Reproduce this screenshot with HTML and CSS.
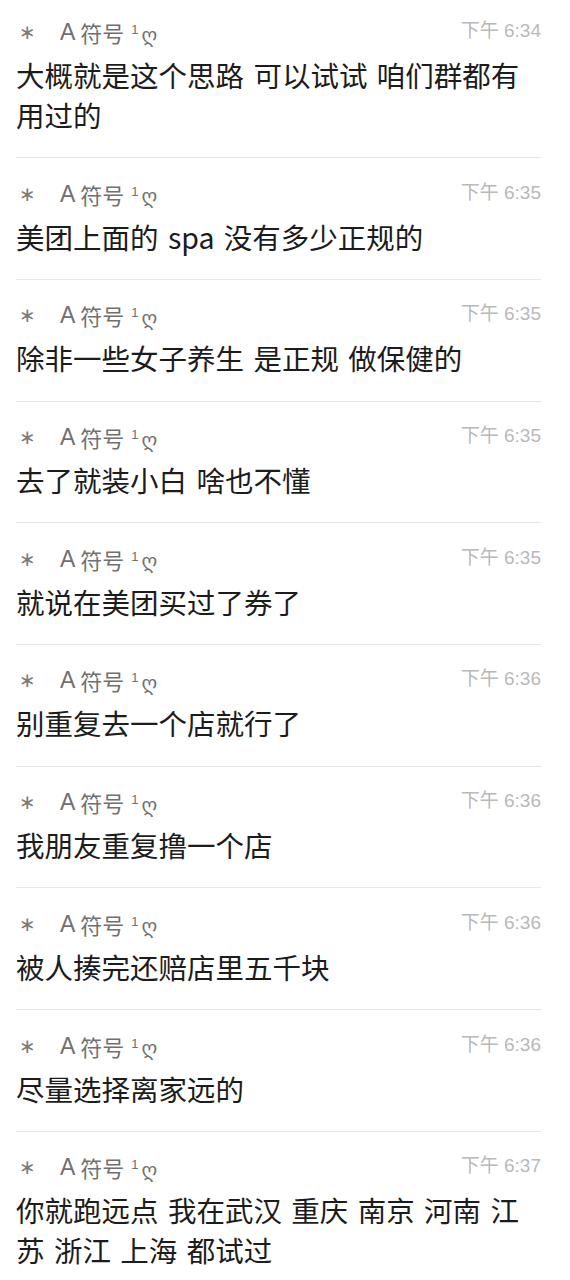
FILE: index.html
```html
<!DOCTYPE html>
<html lang="zh-CN">
<head>
<meta charset="utf-8">
<title>聊天记录</title>
<link rel="stylesheet" href="styles.css">
</head>
<body>
<div class="list">
  <div class="row">
    <div class="head"><span class="name"><span class="star">∗</span><span class="a">A</span>符号<span class="sup">1</span><span class="geo">ღ</span></span><span class="time">下午 6:34</span></div>
    <div class="msg">大概就是这个思路 可以试试 咱们群都有用过的</div>
  </div>
  <div class="row">
    <div class="head"><span class="name"><span class="star">∗</span><span class="a">A</span>符号<span class="sup">1</span><span class="geo">ღ</span></span><span class="time">下午 6:35</span></div>
    <div class="msg">美团上面的 spa 没有多少正规的</div>
  </div>
  <div class="row">
    <div class="head"><span class="name"><span class="star">∗</span><span class="a">A</span>符号<span class="sup">1</span><span class="geo">ღ</span></span><span class="time">下午 6:35</span></div>
    <div class="msg">除非一些女子养生 是正规 做保健的</div>
  </div>
  <div class="row">
    <div class="head"><span class="name"><span class="star">∗</span><span class="a">A</span>符号<span class="sup">1</span><span class="geo">ღ</span></span><span class="time">下午 6:35</span></div>
    <div class="msg">去了就装小白 啥也不懂</div>
  </div>
  <div class="row">
    <div class="head"><span class="name"><span class="star">∗</span><span class="a">A</span>符号<span class="sup">1</span><span class="geo">ღ</span></span><span class="time">下午 6:35</span></div>
    <div class="msg">就说在美团买过了券了</div>
  </div>
  <div class="row">
    <div class="head"><span class="name"><span class="star">∗</span><span class="a">A</span>符号<span class="sup">1</span><span class="geo">ღ</span></span><span class="time">下午 6:36</span></div>
    <div class="msg">别重复去一个店就行了</div>
  </div>
  <div class="row">
    <div class="head"><span class="name"><span class="star">∗</span><span class="a">A</span>符号<span class="sup">1</span><span class="geo">ღ</span></span><span class="time">下午 6:36</span></div>
    <div class="msg">我朋友重复撸一个店</div>
  </div>
  <div class="row">
    <div class="head"><span class="name"><span class="star">∗</span><span class="a">A</span>符号<span class="sup">1</span><span class="geo">ღ</span></span><span class="time">下午 6:36</span></div>
    <div class="msg">被人揍完还赔店里五千块</div>
  </div>
  <div class="row">
    <div class="head"><span class="name"><span class="star">∗</span><span class="a">A</span>符号<span class="sup">1</span><span class="geo">ღ</span></span><span class="time">下午 6:36</span></div>
    <div class="msg">尽量选择离家远的</div>
  </div>
  <div class="row">
    <div class="head"><span class="name"><span class="star">∗</span><span class="a">A</span>符号<span class="sup">1</span><span class="geo">ღ</span></span><span class="time">下午 6:37</span></div>
    <div class="msg">你就跑远点 我在武汉 重庆 南京 河南 江苏 浙江 上海 都试过</div>
  </div>
</div>
</body>
</html>
```

FILE: styles.css
```css
html, body {
  margin: 0;
  padding: 0;
  background: #ffffff;
}
body {
  font-family: "Noto Sans CJK SC", "Noto Sans", sans-serif;
  overflow: hidden;
}
.list {
  margin-top: -3.5px;
  padding: 0 29px 0 16px;
}
.row {
  padding-top: 18.5px;
  padding-bottom: 22.2px;
  border-bottom: 1px solid #e8e8e8;
}
.head {
  display: flex;
  align-items: flex-start;
  justify-content: space-between;
  height: 40px;
}
.name {
  font-size: 22px;
  line-height: 34px;
  height: 34px;
  color: #707070;
  display: flex;
  align-items: center;
}
.star {
  font-family: "DejaVu Sans", sans-serif;
  font-size: 20px;
  width: 14px;
  margin-left: 3px;
  color: #7a7a7a;
}
.a {
  font-family: "Liberation Sans", sans-serif;
  font-size: 23px;
  margin-left: 27px;
  margin-right: 5px;
}
.sup {
  font-family: "Liberation Sans", sans-serif;
  font-size: 13px;
  line-height: 1;
  margin-left: 7px;
  margin-right: 3px;
  align-self: flex-start;
  margin-top: 8px;
}
.geo {
  font-family: "DejaVu Sans", sans-serif;
  font-size: 20px;
  margin-top: 5px;
}
.time {
  font-size: 19px;
  line-height: 32px;
  color: #b9b9b9;
  font-family: "Liberation Sans", "Noto Sans CJK SC", sans-serif;
}
.msg {
  font-size: 28.5px;
  line-height: 40px;
  color: #1c1c1c;
  word-spacing: 3px;
}
```
